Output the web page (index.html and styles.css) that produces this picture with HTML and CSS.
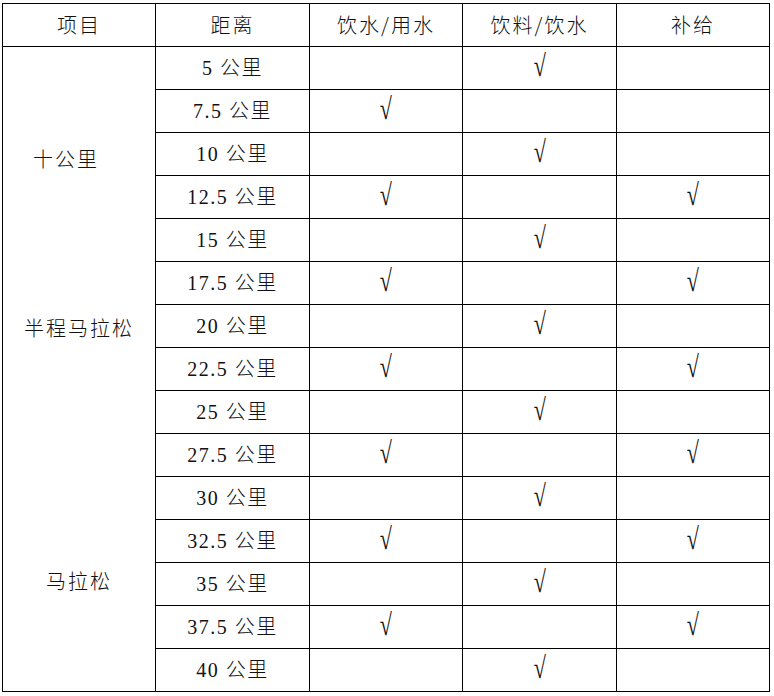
FILE: index.html
```html
<!DOCTYPE html>
<html lang="zh-CN">
<head>
<meta charset="utf-8">
<title>补给站</title>
<link rel="stylesheet" href="styles.css">
</head>
<body>
<table class="supply">
  <colgroup>
    <col class="c1"><col class="c2"><col class="c3"><col class="c4"><col class="c5">
  </colgroup>
  <thead>
    <tr><th>项目</th><th>距离</th><th>饮水/用水</th><th>饮料/饮水</th><th>补给</th></tr>
  </thead>
  <tbody>
    <tr>
      <td class="event" rowspan="15">
        <div class="label label-10k">十公里</div>
        <div class="label label-half">半程马拉松</div>
        <div class="label label-full">马拉松</div>
      </td>
      <td>5 公里</td><td></td><td class="ck"><span>√</span></td><td></td>
    </tr>
    <tr><td>7.5 公里</td><td class="ck"><span>√</span></td><td></td><td></td></tr>
    <tr><td>10 公里</td><td></td><td class="ck"><span>√</span></td><td></td></tr>
    <tr><td>12.5 公里</td><td class="ck"><span>√</span></td><td></td><td class="ck"><span>√</span></td></tr>
    <tr><td>15 公里</td><td></td><td class="ck"><span>√</span></td><td></td></tr>
    <tr><td>17.5 公里</td><td class="ck"><span>√</span></td><td></td><td class="ck"><span>√</span></td></tr>
    <tr><td>20 公里</td><td></td><td class="ck"><span>√</span></td><td></td></tr>
    <tr><td>22.5 公里</td><td class="ck"><span>√</span></td><td></td><td class="ck"><span>√</span></td></tr>
    <tr><td>25 公里</td><td></td><td class="ck"><span>√</span></td><td></td></tr>
    <tr><td>27.5 公里</td><td class="ck"><span>√</span></td><td></td><td class="ck"><span>√</span></td></tr>
    <tr><td>30 公里</td><td></td><td class="ck"><span>√</span></td><td></td></tr>
    <tr><td>32.5 公里</td><td class="ck"><span>√</span></td><td></td><td class="ck"><span>√</span></td></tr>
    <tr><td>35 公里</td><td></td><td class="ck"><span>√</span></td><td></td></tr>
    <tr><td>37.5 公里</td><td class="ck"><span>√</span></td><td></td><td class="ck"><span>√</span></td></tr>
    <tr><td>40 公里</td><td></td><td class="ck"><span>√</span></td><td></td></tr>
  </tbody>
</table>
</body>
</html>
```
FILE: styles.css
```css
html, body {
  margin: 0;
  padding: 0;
  background: #fff;
}
body {
  padding: 3px 0 0 2px;
  font-family: "Liberation Serif", "Noto Sans CJK SC", serif;
  color: #111;
}
.supply {
  border-collapse: collapse;
  table-layout: fixed;
  width: 768px;
}
.c1 { width: 153px; }
.c2 { width: 154px; }
.c3 { width: 153px; }
.c4 { width: 154px; }
.c5 { width: 153px; }
.supply th,
.supply td {
  border: 1px solid #000;
  padding: 0;
  height: 42px;
  text-align: center;
  vertical-align: middle;
  font-size: 20px;
  font-weight: 300;
  letter-spacing: 1.5px;
  line-height: 24px;
}
.supply th {
  font-family: "Noto Sans CJK SC", sans-serif;
  letter-spacing: 2px;
}
.supply td.ck {
  letter-spacing: 0;
}
.supply td.ck span {
  display: inline-block;
  font-size: 21px;
  font-weight: normal;
  transform: translateY(-2px) scale(1.05, 1.45);
}
.supply td.event {
  vertical-align: top;
  font-family: "Noto Sans CJK SC", sans-serif;
  letter-spacing: 2px;
}
.label {
  line-height: 24px;
}
.label-10k {
  margin-top: 100px;
  padding-right: 26px;
}
.label-half {
  margin-top: 145px;
}
.label-full {
  margin-top: 229px;
}
```
